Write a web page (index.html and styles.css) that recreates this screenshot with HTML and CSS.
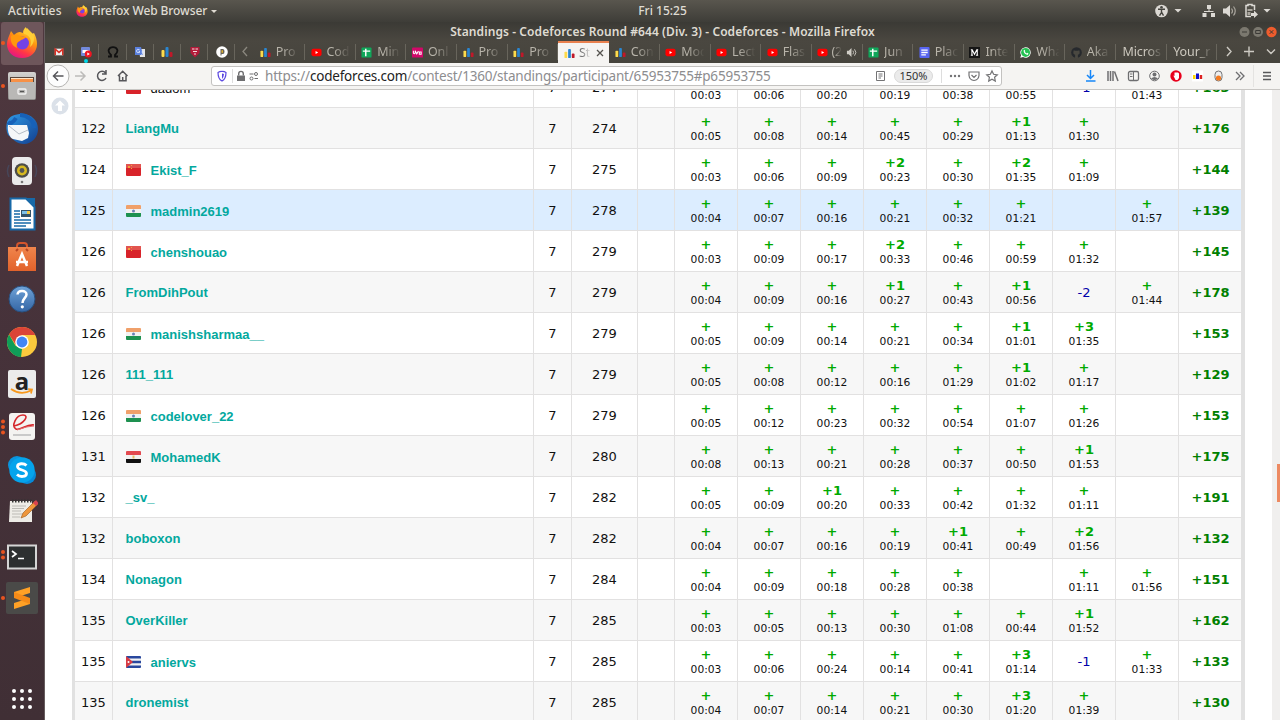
FILE: index.html
```html
<!DOCTYPE html>
<html lang="en">
<head>
<meta charset="utf-8">
<title>Standings - Codeforces Round #644 (Div. 3) - Codeforces</title>
<link rel="stylesheet" href="styles.css">
</head>
<body>
<svg class="defs" width="0" height="0">
  <defs>
    <linearGradient id="fox" x1=".8" y1="0" x2=".3" y2="1"><stop offset="0" stop-color="#ffe84a"/><stop offset=".4" stop-color="#ff980e"/><stop offset=".75" stop-color="#ff3647"/><stop offset="1" stop-color="#e31587"/></linearGradient>
    <linearGradient id="cab" x1="0" y1="0" x2="0" y2="1"><stop offset="0" stop-color="#d4d3d1"/><stop offset="1" stop-color="#8f8e8c"/></linearGradient>
    <linearGradient id="bird" x1="0" y1="0" x2="1" y2="1"><stop offset="0" stop-color="#2f9be8"/><stop offset="1" stop-color="#123e8f"/></linearGradient>
    <linearGradient id="help" x1="0" y1="0" x2="0" y2="1"><stop offset="0" stop-color="#6fa3d8"/><stop offset="1" stop-color="#3465a4"/></linearGradient>
    <linearGradient id="bag" x1="0" y1="0" x2="0" y2="1"><stop offset="0" stop-color="#f0854c"/><stop offset="1" stop-color="#e2622b"/></linearGradient>
  </defs>
  <symbol id="firefox" viewBox="0 0 32 32"><path fill="url(#fox)" d="M3 9l2-5 3 4c2-2 4-3 6-3l3 1c0-3 1-4 3-6 0 4 4 4 6 7l2-1c2 4 3 7 3 11 0 8-6 14-15 14S1 25 1 17c0-3 1-6 2-8z"/><circle cx="16.500" cy="16" r="6.500" fill="#7542e5"/><path fill="#ff980e" d="M5 9c3-2 6-1 8 0l7 1c-2 3-5 2-6 4-3 1-4 4-3 7-5-2-7-7-6-12z"/><path fill="#ffcf38" d="M18 7c6 1 8 6 6 13 4-3 5-9 3-13l-6-6c-3 2-4 4-3 6z"/></symbol>
  <symbol id="cf" viewBox="0 0 12 12"><rect x=".5" y="4" width="3" height="7" rx="1" fill="#fddb4b"/><rect x="4.500" y="1" width="3" height="10" rx="1" fill="#2a86d1"/><rect x="8.500" y="6" width="3" height="5" rx="1" fill="#c01829"/></symbol>
  <symbol id="yt" viewBox="0 0 12 12"><rect x=".5" y="2" width="11" height="8" rx="2" fill="#f00"/><path fill="#fff" d="M5 4.300l2.800 1.700L5 7.700z"/></symbol>
  <symbol id="sheet" viewBox="0 0 12 12"><rect x=".5" y=".5" width="11" height="11" rx="1" fill="#0fa75a"/><path fill="none" stroke="#fff" stroke-width="1.600" d="M2 4.500h8M5.200 2v8"/></symbol>
</svg>

<header class="panel">
  <span class="activities">Activities</span>
  <span class="app"><svg width="12" height="12"><use href="#firefox"/></svg><span class="appname">Firefox Web Browser</span><i class="caret"></i></span>
  <span class="clock">Fri 15:25</span>
  <svg class="tray" width="120" height="22" viewBox="0 0 120 22"><circle cx="6.500" cy="11" r="6.300" fill="#dcd9d4"/><circle cx="6.500" cy="7.300" r="1.300" fill="#45443f"/><path d="M3 9.300h7M6.500 9v3.500l-2 3.200M6.500 12l2 3.700" fill="none" stroke="#45443f" stroke-width="1.400"/><path d="M19.500 9h7L23 12.500z" fill="#dcd9d4"/><path d="M52 5h4v4h-4zM47.500 13h4v4h-4zM56 13h4v4h-4zM53.500 9h1v2h-1zM49 11h9.500v1H49z" fill="#dcd9d4"/><path d="M68 8.500h3L75 5v12l-4-3.500h-3z" fill="#dcd9d4"/><path d="M76.500 8.500q2 2.500 0 5M78.500 6.500q3.500 4.500 0 9" fill="none" stroke="#aaa69e" stroke-width="1.200"/><path d="M96 16.500h-5v-11h2v-1h4v1h2.500V10" fill="none" stroke="#dcd9d4" stroke-width="1.500"/><path d="M92.500 9h5v2h-5zM92.500 12h3v3h-3z" fill="#aaa69e"/><path d="M96 13h3v-2.500l4 4-4 3.500v-2h-3z" fill="#dcd9d4"/><path d="M108.500 9h7l-3.500 3.500z" fill="#dcd9d4"/></svg>
</header>

<div class="desktop">
  <nav class="dock">
    <div class="item active run1"><svg width="32" height="32"><use href="#firefox"/></svg></div>
    <div class="item run1"><svg width="32" height="32" viewBox="0 0 32 32"><rect x="2" y="2" width="28" height="28" rx="2" fill="url(#cab)"/><path fill="#59473c" d="M4 7h24v6H4z"/><path fill="#f79147" d="M5 9h22v4H5z"/><path stroke="#ffe3c7" d="M5 8.500h22"/><path fill="#b9b8b6" d="M3 12h26v17H3z"/><rect x="12" y="19" width="8" height="5" rx="1" fill="none" stroke="#f4f4f4" stroke-width="1.300"/><path stroke="#555" stroke-width="1.300" d="M14 21.500h4"/></svg></div>
    <div class="item"><svg width="34" height="34" viewBox="0 0 34 34"><path fill="url(#bird)" d="M2 10C4 4 10 2 17 2c9 0 16 6 16 15 0 8-6 15-14 15-3 0-7-1-9-3L3 23c-2-4-2-9-1-13z"/><path fill="#f5f7f9" d="M3 13l19 0 2 8-1 5-6 3-9-2c-3-1-6-7-5-14z"/><path d="M4 14l10 8 9-4" fill="none" stroke="#b5bdc6"/><path d="M15 3c7 0 14 5 14 13M3 10c2 2 5 1 8-4" fill="none" stroke="#1761b8" stroke-width="4"/></svg></div>
    <div class="item"><svg width="34" height="34" viewBox="0 0 34 34"><path d="M4 11q-3 6 0 12M30 11q3 6 0 12" fill="none" stroke="#474659" stroke-width="1.500"/><rect x="7" y="3" width="20" height="28" rx="4" fill="#ebebeb"/><circle cx="17" cy="16.500" r="7.300" fill="#4d4d49"/><circle cx="17" cy="16.500" r="5" fill="#d7b920"/><circle cx="17" cy="16.500" r="2.400" fill="#555"/><circle cx="17" cy="28" r="1.300" fill="#777"/></svg></div>
    <div class="item"><svg width="32" height="34" viewBox="0 0 32 34"><path d="M4.500 1.500H20l8.500 8.500v22.500h-24z" fill="#fff" stroke="#1769a8" stroke-width="2"/><path fill="#1769a8" d="M19 1h10v10z"/><path d="M8 14h6M8 17h6M8 20h6M8 23h17M8 26h17M8 29h12" stroke="#1769a8" stroke-width="1.300"/><path fill="#32546a" d="M15 13h10v7H15z"/><path fill="#7cc0e8" d="M16 14h8v3h-8z"/><path fill="#f3c842" d="M21 14h3v3h-3z"/></svg></div>
    <div class="item"><svg width="30" height="32" viewBox="0 0 30 32"><path d="M10 8V5q0-3 3-3h4q3 0 3 3v3" fill="none" stroke="#d5552c" stroke-width="2"/><path fill="url(#bag)" d="M1 6h28v24H1z"/><path d="M9 10l2-2M21 10l-2-2" stroke="#b94623" stroke-width="2"/><path d="M10 25l5-12 5 12M9 21h12" fill="none" stroke="#fff" stroke-width="2.500"/></svg></div>
    <div class="item"><svg width="28" height="28" viewBox="0 0 28 28"><circle cx="14" cy="14" r="13" fill="url(#help)" stroke="#29507f"/><path d="M9.500 9.500C10 4.500 18.500 5 18.500 9.500c0 3-4 4-4 8.500" fill="none" stroke="#fff" stroke-width="2.500"/><circle cx="14.300" cy="21.800" r="1.600" fill="#fff"/></svg></div>
    <div class="item"><svg width="30" height="30" viewBox="0 0 30 30"><circle cx="15" cy="15" r="15" fill="#fbc93d"/><path fill="#db4437" d="M2 7.500A15 15 0 0 1 28.200 8H15l-6 10z"/><path fill="#0f9d58" d="M2 7.500l6.500 11.300L15 22l-1 8A15 15 0 0 1 2 7.500z"/><circle cx="15" cy="15" r="6.800" fill="#fff"/><circle cx="15" cy="15" r="5.400" fill="#4285f4"/></svg></div>
    <div class="item"><span class="amazon">a<svg width="26" height="7" viewBox="0 0 26 7"><path d="M2 1q10 7 21 1M19 1l4 .500-1 4" fill="none" stroke="#f7981d" stroke-width="1.700"/></svg></span></div>
    <div class="item run3"><svg width="30" height="30" viewBox="0 0 30 30"><rect x="2" y="1" width="26" height="27" rx="3" fill="#f4f3f1"/><path d="M7 14C17 12 23 3 16 3 9 3 4 14 9 17c4 2 10-5 18-4" fill="none" stroke="#d4262b" stroke-width="1.600"/><path d="M10 18q10-4 17-4" stroke="#e56b6d" fill="none"/><path d="M6 23h18" stroke="#bbb" stroke-width="1.500"/></svg></div>
    <div class="item"><svg width="30" height="30" viewBox="0 0 30 30"><circle cx="10" cy="10" r="9" fill="#0a94dd"/><circle cx="20" cy="20" r="9" fill="#078ad8"/><circle cx="15" cy="15" r="12.700" fill="#05a4ec"/><path d="M19.500 10.500C17 8 10.500 8 10.500 11.500c0 4.500 9 2.500 9 7 0 3.500-6.500 4-9.500 1" fill="none" stroke="#fff" stroke-width="2.800"/></svg></div>
    <div class="item"><svg width="32" height="30" viewBox="0 0 32 30"><path fill="#eeece7" d="M4 4h22v21H3z"/><path d="M6 4h20" stroke="#333" stroke-width="3" stroke-dasharray="1.500 1.500"/><path d="M6 9h14M6 11.500h12M6 14h9M6 17h12M6 20h8" stroke="#bcbab5"/><path d="M15 21l2-5L29 4l3 3-12 12z" fill="#ee963c" stroke="#9a5a1f" stroke-width=".6"/><path d="M27 6l3-3 2.500 3-2.500 3z" fill="#d9424f"/></svg></div>
    <div class="item run2"><svg width="32" height="28" viewBox="0 0 32 28"><rect x="2" y="2.500" width="28" height="23" fill="#2d2f30" stroke="#d5d5d5" stroke-width="2"/><path d="M6 8l4 3-4 3M12 15.500h6" fill="none" stroke="#fff" stroke-width="1.700"/></svg></div>
    <div class="item run1"><svg width="32" height="32" viewBox="0 0 32 32"><rect width="32" height="32" rx="2" fill="#4a4a48"/><path fill="#ffa126" d="M8 10l16-5v6l-16 5zM8 21l16-5v6L8 27z"/><path fill="#f58b18" d="M8 10v6l16 6v-6z"/></svg></div>
    <svg class="apps" width="24" height="24" viewBox="0 0 24 24" fill="#fff"><circle cx="4" cy="4" r="2"/><circle cx="12" cy="4" r="2"/><circle cx="20" cy="4" r="2"/><circle cx="4" cy="12" r="2"/><circle cx="12" cy="12" r="2"/><circle cx="20" cy="12" r="2"/><circle cx="4" cy="20" r="2"/><circle cx="12" cy="20" r="2"/><circle cx="20" cy="20" r="2"/></svg>
  </nav>

  <main class="window">
    <div class="titlebar">
      <span class="title">Standings - Codeforces Round #644 (Div. 3) - Codeforces - Mozilla Firefox</span>
      <svg class="buttons" width="38" height="12" viewBox="0 0 38 12"><circle cx="5.500" cy="6" r="5" fill="#7b786f"/><circle cx="19" cy="6" r="5" fill="#7b786f"/><circle cx="32.500" cy="6" r="5.200" fill="#ee5c2d"/><path d="M3 6h5M16.700 4.500h4.600v3h-4.600zM30.700 4.200l3.600 3.600M34.300 4.200l-3.600 3.600" fill="none" stroke="#3c3b37"/></svg>
    </div>

    <div class="tabs">
      <div class="pin"><svg width="10" height="10" viewBox="0 0 12 12"><path fill="#eee" d="M1 2h10v8H1z"/><path d="M1.500 10V2.500L6 6.500l4.500-4V10" fill="none" stroke="#d93025" stroke-width="1.800"/></svg></div>
      <div class="pin dot"><svg width="12" height="12" viewBox="0 0 12 12"><rect x="1" y="1" width="9" height="9" rx="1" fill="#7289da"/><path fill="#fff" d="M2.500 4h6v3h-6z"/><circle cx="8.300" cy="8" r="3.500" fill="#f01522"/><path fill="#fff" d="M7.300 6.500l2.500 1.500-2.500 1.500z"/></svg></div>
      <div class="pin"><svg width="12" height="12" viewBox="0 0 12 12"><path d="M1 10.500h3V9C-.5 5 2 1.200 6 1.200S12.500 5 8 9v1.500h3" fill="none" stroke="#111" stroke-width="1.800"/></svg></div>
      <div class="pin"><svg width="12" height="12" viewBox="0 0 12 12"><path fill="#e4e4e4" d="M5 3h6v8H6z"/><path fill="#5a80dd" d="M1 1h6l2 8H1z"/><path d="M5.500 3.500q-3-1-3 1.500t3 1.500V5H4.500M7.500 6h3M9 5q0 3-1.500 4" fill="none" stroke="#dce7ff" stroke-width=".9"/></svg></div>
      <div class="pin"><svg width="12" height="12"><use href="#cf"/></svg></div>
      <div class="pin"><svg width="10" height="12" viewBox="0 0 10 12"><path fill="#b31b3a" d="M.5 1h9v6L5 11.500.5 7z"/><path d="M2 3h2.500M5.500 3H8M3 5.500h4M4 8h2" stroke="#f3dede" stroke-width="1.200"/></svg></div>
      <div class="pin last"><svg width="12" height="12" viewBox="0 0 12 12"><circle cx="6" cy="6" r="5.800" fill="#fff"/><path fill="#66635a" d="M4.500 3h2.500q1.500 0 1.500 2.500T7 8H5.500v1.500h-1z"/><path fill="#e6b32b" d="M5.500 4.300H7v2.400H5.500z"/></svg></div>
      <svg class="scroll" width="19" height="21" viewBox="0 0 19 21"><path d="M12 6l-4 4.500 4 4.500" fill="none" stroke="#8b887f" stroke-width="1.300"/></svg>
      <div class="tab"><svg><use href="#cf"/></svg><span>Pro</span></div>
      <div class="tab"><svg><use href="#yt"/></svg><span>Cod</span></div>
      <div class="tab"><svg><use href="#sheet"/></svg><span>Min</span></div>
      <div class="tab"><svg viewBox="0 0 12 12"><rect y=".5" width="12" height="11" rx="1" fill="#d10869"/><path d="M1.500 4v2.500q1 1.500 2 0V4l1.700 3.500L7 4.500M8 5.500h2v2.500H8z" fill="none" stroke="#fff" stroke-width="1.100"/></svg><span>Onl</span></div>
      <div class="tab"><svg><use href="#cf"/></svg><span>Pro</span></div>
      <div class="tab"><svg><use href="#cf"/></svg><span>Pro</span></div>
      <div class="tab current"><svg><use href="#cf"/></svg><span>St</span><b class="close"><svg viewBox="0 0 8 8"><path d="M1 1l6 6M7 1L1 7" stroke="#55534f" stroke-width="1.300"/></svg></b></div>
      <div class="tab"><svg><use href="#cf"/></svg><span>Con</span></div>
      <div class="tab"><svg><use href="#yt"/></svg><span>Mod</span></div>
      <div class="tab"><svg><use href="#yt"/></svg><span>Lect</span></div>
      <div class="tab"><svg><use href="#yt"/></svg><span>Flas</span></div>
      <div class="tab sound"><svg><use href="#yt"/></svg><span>(2</span><svg viewBox="0 0 12 12"><path d="M1 4h2l3-3v10L3 8H1z" fill="#d0cdc6"/><path d="M7.500 4q1.500 2 0 4M9.300 2.500q3 3.500 0 7" fill="none" stroke="#d0cdc6"/></svg></div>
      <div class="tab"><svg><use href="#sheet"/></svg><span>Jun</span></div>
      <div class="tab"><svg viewBox="0 0 12 12"><rect x=".5" width="11" height="12" rx="1" fill="#5865f2"/><path d="M2.500 3.500h7M2.500 6h7M2.500 8.500h5" stroke="#fff" stroke-width="1.400"/></svg><span>Plac</span></div>
      <div class="tab"><svg viewBox="0 0 12 12"><path fill="#151515" d="M0 0h12v12H0z"/><path d="M2 3h1.500L6 8l2.500-5H10M3.200 3v6M9 3v6M2 9h2.300M7.500 9H10" fill="none" stroke="#fff" stroke-width="1.200"/></svg><span>Inte</span></div>
      <div class="tab"><svg viewBox="0 0 12 12"><path d="M.3 11.700L1.200 9A5.700 5.700 0 1 1 3.300 11z" fill="#fff"/><circle cx="6.100" cy="5.900" r="4.900" fill="#25c253"/><path d="M4 3.500q-.5 3.700 4.300 5.200l1-1.500-1.500-.8-.8.700L5.200 5.300l.6-.8L5 3z" fill="#fff"/></svg><span>Wha</span></div>
      <div class="tab"><svg viewBox="0 0 12 12"><circle cx="6" cy="6" r="5.800" fill="#26292d"/><path fill="#4a4841" d="M3 3.500l1.500.5h3L9 3.500q1.500 4.500-1.500 5V12h-3V8.500Q1.500 8 3 3.500z"/></svg><span>Aka</span></div>
      <div class="tab wide"><span>Micros</span></div>
      <div class="tab wide end"><span>Your_r</span></div>
      <svg class="controls" width="62" height="21" viewBox="0 0 62 21"><path d="M9 6l4 4.500L9 15M26 10.500h10M31 5.500v10M49 8.500l4 4 4-4" fill="none" stroke="#cdcac3" stroke-width="1.400"/></svg>
    </div>

    <div class="toolbar">
      <svg class="nav" width="92" height="26" viewBox="0 0 92 26"><circle cx="13" cy="13" r="11" fill="#fdfdfd" stroke="#b5b4b2"/><g fill="none" stroke="#56565a" stroke-width="1.500"><path d="M18.500 13H9M13 8.500L8.500 13l4.500 4.500"/><path stroke="#bcbbb9" d="M30 13h9.500M35.500 8.500L40 13l-4.500 4.500"/><path d="M60.500 10a4.500 4.500 0 1 0 .5 5M61 7v4h-4"/><path d="M73 13l4.700-4.700L82.500 13M74.500 12.500v5.200h6.500v-5.200M77.700 14v3.500"/></g></svg>
      <div class="urlbar">
        <svg width="48" height="18" viewBox="0 0 48 18"><path d="M10 4.500q-2-.2-4 1c0 5 1 7 4 8.500 3-1.500 4-3.500 4-8.500q-2-1.200-4-1z" fill="none" stroke="#5a46e0" stroke-width="1.200"/><path d="M10 6.500q1.500 0 2 .5-.1 3-2 5z" fill="#5a46e0"/><path d="M20.500 2v14" stroke="#ddd"/><path d="M25 8.500h8v5.500h-8z" fill="#6e6e70"/><path d="M26.700 8.500V6.700a2.300 2.300 0 0 1 4.600 0v1.800" fill="none" stroke="#6e6e70" stroke-width="1.400"/><path d="M37.500 7h4M42.500 11.500h3.500" stroke="#6e6e70" stroke-width="1.200"/><circle cx="44" cy="7" r="1.500" fill="none" stroke="#6e6e70"/><circle cx="39.500" cy="11.500" r="1.500" fill="none" stroke="#6e6e70"/></svg>
        <span class="url">https://<b>codeforces.com</b>/contest/1360/standings/participant/65953755#p65953755</span>
        <svg class="reader" width="12" height="14" viewBox="0 0 12 14"><path d="M1.500 2.500h8v9h-8zM3.500 5h4M3.500 7h4M3.500 9h2.500" fill="none" stroke="#737375"/></svg>
        <span class="zoom">150%</span>
        <svg class="actions" width="64" height="18" viewBox="0 0 64 18"><path d="M4.500 2v14" stroke="#ddd"/><g fill="#737375"><circle cx="14" cy="9" r="1.200"/><circle cx="18" cy="9" r="1.200"/><circle cx="22" cy="9" r="1.200"/></g><path d="M32 5h10v3.500q-.5 4.500-5 5-4.500-.5-5-5zM34.500 8l2.500 2.500L39.500 8M55 4l1.600 3.300 3.700.5-2.700 2.500.7 3.700-3.300-1.800-3.300 1.800.7-3.700-2.700-2.500 3.700-.5z" fill="none" stroke="#737375" stroke-width="1.200"/></svg>
      </div>
      <svg class="exts" width="199" height="26" viewBox="0 0 199 26"><path d="M9.500 7v8M6 12l3.500 3.500L13 12M5 18h9.500" fill="none" stroke="#1686f8" stroke-width="1.500"/><path d="M27 8v10M29.500 8v10M32 8v10M33.500 8.500l3.500 9.500" stroke="#6e6e70" stroke-width="1.500"/><rect x="47.500" y="8.500" width="10" height="9" rx="1.500" fill="none" stroke="#6e6e70" stroke-width="1.300"/><path d="M49 11h2.500M49 13.500h2.500M52.500 9v8" stroke="#6e6e70"/><circle cx="73.500" cy="13" r="4.800" fill="none" stroke="#6e6e70"/><circle cx="73.500" cy="11.500" r="2" fill="#6e6e70"/><path fill="#6e6e70" d="M70 15.500q3.500-3 7 0-3.500 3-7 0z"/><circle cx="95" cy="13" r="5.700" fill="#e8001c"/><path fill="#fff" d="M92.300 12.500l1.200.5V9.500h3.500l1 1v4.500l-1.500 2h-2z"/><path fill="#fff" d="M111 7.500h11v11h-11z"/><path fill="#ffd600" d="M112 12h2.500v4H112z"/><path fill="#11c" d="M115 10.500h3V16h-3z"/><path fill="#d22" d="M118.700 12h2.500v4h-2.500z"/><rect x="134" y="8" width="7" height="10" rx="3.500" fill="#eee" stroke="#737375"/><circle cx="137.500" cy="15" r="2.600" fill="#f47a20"/><path d="M155 9l4 4-4 4M159 9l4 4-4 4" fill="none" stroke="#6e6e70" stroke-width="1.300"/><path d="M172.500 2v22" stroke="#e4e3e1"/><path d="M182 9.500h8M182 13h8M182 16.500h8" stroke="#57575a" stroke-width="1.300"/></svg>
    </div>

    <div class="page">
      <svg class="up" width="18" height="18" viewBox="0 0 18 18"><circle cx="9" cy="9" r="8.500" fill="#dbe1e9"/><path d="M9 3.500l5 5h-3V14H7V8.500H4z" fill="#fff"/></svg>
      <div class="standings" id="standings"></div>
      <div class="scrollbar"><i class="thumb"></i></div>
    </div>
  </main>
</div>
<script src="standings.js"></script>
</body>
</html>
```
FILE: styles.css
```css
* { box-sizing: border-box; }
body { margin: 0; width: 1280px; height: 720px; overflow: hidden; background: #fff; color: #111; font-family: "DejaVu Sans", sans-serif; }
svg { display: block; flex: none; }
.defs { position: absolute; }

.panel { height: 22px; position: relative; display: flex; align-items: center; background: linear-gradient(#59564e, #3e3d38); color: #dfdbd2; font: 500 12px/22px "Noto Sans", sans-serif; }
.activities { margin-left: 8px; width: 68px; letter-spacing: .2px; }
.app { display: flex; align-items: center; gap: 3px; }
.appname { width: 117px; white-space: nowrap; letter-spacing: -.1px; }
.caret { border: 3px solid transparent; border-top: 3.500px solid #dfdbd2; margin-top: 3px; }
.clock { position: absolute; left: 0; right: 0; padding-left: 45px; text-align: center; }
.tray { margin-left: auto; margin-right: 5px; }

.desktop { display: flex; height: 698px; }
.dock { width: 45px; flex: none; display: flex; flex-direction: column; background: linear-gradient(#4f383f, #46323a 45%, #402f35); border-right: 1px solid #665c5e; }
.item { height: 42.650px; display: flex; align-items: center; justify-content: center; position: relative; }
.item.active::before { content: ""; position: absolute; inset: 0 1px 0; border-radius: 3px; background: #6e565b; }
.item svg { position: relative; }
.item::after { position: absolute; left: 1px; top: 50%; width: 4px; height: 4px; border-radius: 2px; background: #e95420; margin-top: -2px; }
.run1::after, .run2::after, .run3::after { content: ""; }
.run2::after { margin-top: -5px; box-shadow: 0 5.500px #e95420; }
.run3::after { margin-top: -2px; box-shadow: 0 5.500px #e95420, 0 -5.500px #e95420; }
.run2 { padding-top: 3px; }
.amazon { width: 28px; height: 28px; border-radius: 2px; background: #ebebeb; color: #222; font: bold 24px/21px "Noto Sans", sans-serif; display: flex; flex-direction: column; align-items: center; }
.amazon svg { margin-top: -3px; }
.apps { margin: auto auto 9px 10px; }

.window { flex: 1; min-width: 0; display: flex; flex-direction: column; }
.titlebar { height: 19px; display: flex; align-items: center; justify-content: flex-end; position: relative; background: linear-gradient(#3b3a35, #4a4740); }
.title { position: absolute; left: 0; right: 0; text-align: center; white-space: nowrap; color: #dfdbd2; font: 600 12px/19px "Noto Sans", sans-serif; letter-spacing: .08px; }
.buttons { margin-right: 3px; }

.tabs { height: 22px; display: flex; background: linear-gradient(#4a4740, #46443d); color: #b8b4aa; font: 12.500px/22px "Noto Sans", sans-serif; }
.pin { width: 27.200px; flex: none; display: flex; align-items: center; justify-content: center; position: relative; }
.pin::after, .tab::after { content: ""; position: absolute; right: 0; top: 3px; bottom: 3px; width: 1px; background: #68655c; }
.dot::before { content: ""; position: absolute; bottom: 0; width: 4px; height: 4px; border-radius: 2px; background: #00d7e8; }
.scroll { flex: none; }
.tab { width: 50.700px; flex: none; display: flex; align-items: center; gap: 5px; padding-left: 5.500px; position: relative; }
.tab svg { width: 11px; height: 11px; }
.tab span { width: 26px; white-space: nowrap; letter-spacing: -.1px; -webkit-mask-image: linear-gradient(90deg, #000 25%, transparent 90%); mask-image: linear-gradient(90deg, #000 25%, transparent 90%); }
.tab.current { background: #f5f4f2; border-top: 2px solid #e9814f; color: #777; gap: 4px; }
.tab.current span { width: 13px; }
.tab .close svg { width: 8px; height: 8px; }
.tab.current::after { display: none; }
.tab.sound { gap: 3px; }
.tab.sound span { width: 12px; }
.tab.wide { padding-left: 6.500px; }
.tab.wide span { width: 40px; color: #ccc8be; -webkit-mask-image: linear-gradient(90deg, #000 60%, transparent); mask-image: linear-gradient(90deg, #000 60%, transparent); }
.controls { flex: none; margin-left: auto; }

.toolbar { height: 27px; flex: none; display: flex; align-items: center; background: #f5f4f2; border-bottom: 1px solid #c8c6c3; position: relative; z-index: 1; }
.urlbar { margin-left: 74px; width: 791px; height: 20px; display: flex; align-items: center; background: #fff; border: 1px solid #c3c2c0; border-radius: 3px; }
.url { margin-left: 5px; flex: 1; white-space: nowrap; color: #8d8d8f; font: 13.500px/18px "Noto Sans", sans-serif; letter-spacing: -.205px; }
.url b { font-weight: 400; color: #222; }
.zoom { width: 39px; height: 14px; margin-left: 7px; border-radius: 7px; background: #ebebeb; border: 1px solid #d9d9d9; font: 11px/12px "Noto Sans", sans-serif; text-align: center; color: #333; }
.actions { margin-left: 4px; }
.exts { margin-left: auto; }

.page { flex: 1; min-height: 0; display: flex; overflow: hidden; position: relative; }
.up { margin: 7px 4px 0 6px; }
.standings { width: 1173px; margin-left: -1px; border-left: 3px solid #e1e1e1; border-right: 4px solid #e1e1e1; height: 672px; margin-top: -23px; }
.row { height: 41px; display: grid; grid-template-columns: 38px 421px 38px 66px 37px repeat(9, 63px); }
.row:nth-child(even) { background: #f7f7f7; }
.row.mine { background: #dcedff; }
.row > div { border-right: 1px solid #e2e1e1; border-bottom: 1px solid #e2e1e1; padding-top: 1px; font-size: 13px; display: flex; flex-direction: column; align-items: center; justify-content: center; line-height: 14px; }
.row > div:last-child { border-right: 0; }
.row > .who { flex-direction: row; justify-content: flex-start; gap: 10px; padding: 2px 0 0 12.500px; font: bold 13px/16px "Liberation Sans", Arial, sans-serif; color: #03a89e; }
.who svg { border-radius: 1px; margin-top: -1px; }
.who.flagged span { padding-top: 2px; }
.row > .who.unrated { color: #111; font-weight: 400; }
.row:first-child .ok { visibility: hidden; }
.row > .solved { padding-top: 3px; }
.ok { font-weight: 700; color: #0a0; }
.time { font-size: 10.700px; line-height: 15px; }
.fail { color: #00a; }
.row > .delta { font-weight: 700; color: #008000; }
.scrollbar { margin-left: auto; width: 8px; background: #f0efee; display: flex; justify-content: flex-end; }
.thumb { width: 3px; height: 38px; margin-top: 374px; background: #ed8a62; }
```
FILE: standings.js
```js
// rank | flag | handle | solved | penalty | rating change | results for problems A to H
const rows = [
  "122|cn|dadom|7|274|+163|+ 00:03,+ 00:06,+ 00:20,+ 00:19,+ 00:38,+ 00:55,-1,+ 01:43",
  "122||LiangMu|7|274|+176|+ 00:05,+ 00:08,+ 00:14,+ 00:45,+ 00:29,+1 01:13,+ 01:30,",
  "124|cn|Ekist_F|7|275|+144|+ 00:03,+ 00:06,+ 00:09,+2 00:23,+ 00:30,+2 01:35,+ 01:09,",
  "125|in|madmin2619|7|278|+139|+ 00:04,+ 00:07,+ 00:16,+ 00:21,+ 00:32,+ 01:21,,+ 01:57",
  "126|cn|chenshouao|7|279|+145|+ 00:03,+ 00:09,+ 00:17,+2 00:33,+ 00:46,+ 00:59,+ 01:32,",
  "126||FromDihPout|7|279|+178|+ 00:04,+ 00:09,+ 00:16,+1 00:27,+ 00:43,+1 00:56,-2,+ 01:44",
  "126|in|manishsharmaa__|7|279|+153|+ 00:05,+ 00:09,+ 00:14,+ 00:21,+ 00:34,+1 01:01,+3 01:35,",
  "126||111_111|7|279|+129|+ 00:05,+ 00:08,+ 00:12,+ 00:16,+ 01:29,+1 01:02,+ 01:17,",
  "126|in|codelover_22|7|279|+153|+ 00:05,+ 00:12,+ 00:23,+ 00:32,+ 00:54,+ 01:07,+ 01:26,",
  "131|eg|MohamedK|7|280|+175|+ 00:08,+ 00:13,+ 00:21,+ 00:28,+ 00:37,+ 00:50,+1 01:53,",
  "132||_sv_|7|282|+191|+ 00:05,+ 00:09,+1 00:20,+ 00:33,+ 00:42,+ 01:32,+ 01:11,",
  "132||boboxon|7|282|+132|+ 00:04,+ 00:07,+ 00:16,+ 00:19,+1 00:41,+ 00:49,+2 01:56,",
  "134||Nonagon|7|284|+151|+ 00:04,+ 00:09,+ 00:18,+ 00:28,+ 00:38,,+ 01:11,+ 01:56",
  "135||OverKiller|7|285|+162|+ 00:03,+ 00:05,+ 00:13,+ 00:30,+ 01:08,+ 00:44,+1 01:52,",
  "135|cu|aniervs|7|285|+133|+ 00:03,+ 00:06,+ 00:24,+ 00:14,+ 00:41,+3 01:14,-1,+ 01:33",
  "135||dronemist|7|285|+130|+ 00:04,+ 00:07,+ 00:14,+ 00:21,+ 00:30,+3 01:20,+ 01:39,"
];

const flags = {
  cn: '<path fill="#d8232a" d="M0 0h15v12H0z"/><path fill="#e2544f" d="M0 0h15v4H0z"/><path fill="#f4a53c" d="M2 2h2v2H2zM5 1h1v1H5zM5 4h1v1H5z"/>',
  in: '<path fill="#f2f2f2" d="M0 0h15v12H0z"/><path fill="#f0a06a" d="M0 0h15v4H0z"/><path fill="#1e9150" d="M0 8h15v4H0z"/><circle cx="7.5" cy="6" r="1.5" fill="#6a80b5"/>',
  eg: '<path fill="#f2f2f2" d="M0 0h15v12H0z"/><path fill="#e34a50" d="M0 0h15v4H0z"/><path fill="#111" d="M0 8h15v4H0z"/><path fill="#e5bf68" d="M6.500 4.500h2v3h-2z"/>',
  cu: '<path fill="#f2f2f2" d="M0 0h15v12H0z"/><path fill="#29489e" d="M0 0h15v2.500H0zM0 4.800h15v2.400H0zM0 9.500h15V12H0z"/><path fill="#d83a43" d="M0 0l7 6-7 6z"/><circle cx="2.500" cy="6" r="1" fill="#fff"/>'
};

function result(text) {
  if (!text) return "<div></div>";
  if (text[0] === "-") return `<div><span class="fail">${text}</span></div>`;
  const [mark, time] = text.split(" ");
  return `<div class="solved"><span class="ok">${mark}</span><span class="time">${time}</span></div>`;
}

document.getElementById("standings").innerHTML = rows.map((line, i) => {
  const [rank, flag, handle, solved, penalty, delta, results] = line.split("|");
  const icon = flag ? `<svg width="15" height="12" viewBox="0 0 15 12">${flags[flag]}</svg>` : "";
  const who = `who${flag ? " flagged" : ""}${i === 0 ? " unrated" : ""}`;
  return `<div class="row${rank === "125" ? " mine" : ""}"><div>${rank}</div><div class="${who}">${icon}<span>${handle}</span></div><div>${solved}</div><div>${penalty}</div><div></div>${results.split(",").map(result).join("")}<div class="delta">${delta}</div></div>`;
}).join("");
```
